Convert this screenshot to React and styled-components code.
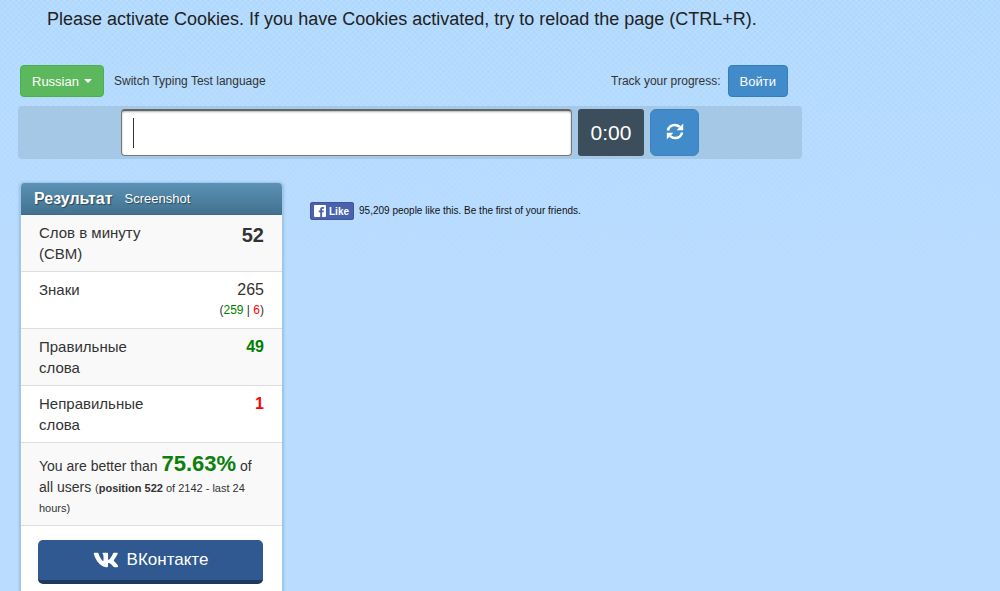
import React from "react";
import styled, { createGlobalStyle } from "styled-components";
import { FaVk } from "react-icons/fa";

const GlobalStyle = createGlobalStyle`
  * {
    box-sizing: border-box;
  }

  body {
    margin: 0;
    background-color: #badcff;
    color: #333333;
    font-family: "Liberation Sans", Arial, sans-serif;
    font-size: 14px;
    line-height: 20px;
  }

  button,
  input {
    font-family: inherit;
  }
`;

// Clips the panel that runs past the bottom of the window
const Page = styled.div`
  height: 100vh;
  overflow: hidden;
  padding: 8px 18px 0;
  background-image: linear-gradient(to bottom, rgba(186, 220, 255, 0) 0, #badcff 320px),
    repeating-linear-gradient(45deg, rgba(150, 210, 245, 0.2) 0 2px, transparent 2px 4px),
    repeating-linear-gradient(-45deg, rgba(150, 210, 245, 0.2) 0 2px, transparent 2px 4px);
`;

const Container = styled.div`
  max-width: 784px;
`;

const Notice = styled.p`
  margin: 0 0 35px;
  padding-left: 29px;
  color: #222222;
  font-size: 18px;
  line-height: 22px;
`;

const TopBar = styled.div`
  display: flex;
  align-items: center;
  justify-content: space-between;
  padding: 0 14px 0 2px;
  margin-bottom: 9px;
`;

const Group = styled.div`
  display: flex;
  align-items: center;
  gap: ${(props) => props.$gap};
  font-size: 12px;
`;

const Button = styled.button`
  display: flex;
  align-items: center;
  gap: 5px;
  height: 32px;
  padding: 0 11px;
  border: 1px solid ${(props) => (props.$green ? "#4cae4c" : "#357ebd")};
  border-radius: 4px;
  background: ${(props) => (props.$green ? "#5cb85c" : "#428bca")};
  color: #ffffff;
  font-size: 13px;
  cursor: pointer;
`;

const Caret = styled.span`
  border-top: 4px solid #ffffff;
  border-left: 4px solid transparent;
  border-right: 4px solid transparent;
`;

const InputRow = styled.div`
  display: flex;
  justify-content: center;
  gap: 6px;
  padding: 3px 0;
  border-radius: 4px;
  background: #a6c8e7;
`;

const WordInput = styled.input`
  flex: 0 1 451px;
  min-width: 0;
  height: 47px;
  padding: 0 12px;
  border: 1px solid #777777;
  border-top: 2px solid #666666;
  border-radius: 4px;
  background: #ffffff linear-gradient(#333333, #333333) 11px 7px / 1px 30px no-repeat;
  box-shadow: inset 0 1px 2px rgba(0, 0, 0, 0.3);
  font-size: 24px;
  outline: none;
`;

const Timer = styled.div`
  width: 66px;
  height: 47px;
  border-radius: 3px;
  background: #3c4d5c;
  color: #ffffff;
  font-size: 21px;
  line-height: 47px;
  text-align: center;
`;

const ReloadButton = styled.button`
  display: flex;
  align-items: center;
  justify-content: center;
  width: 49px;
  height: 47px;
  padding: 0 0 2px;
  border: 1px solid #3a82c2;
  border-radius: 6px;
  background: #428bca;
  color: #ffffff;
  cursor: pointer;
`;

const Content = styled.div`
  display: flex;
  align-items: flex-start;
  gap: 27px;
  padding: 24px 0 0 2px;
`;

const Panel = styled.section`
  flex: 0 0 263px;
  border: 1px solid #a3c6e6;
  border-top: 0;
  border-radius: 4px 4px 0 0;
  background: #ffffff;
  box-shadow: 0 0 3px rgba(60, 110, 160, 0.5);
  overflow: hidden;
`;

const PanelHeader = styled.header`
  display: flex;
  align-items: center;
  gap: 12px;
  height: 32px;
  padding: 0 13px;
  border-bottom: 1px solid #3c6c90;
  background: linear-gradient(#5c92b5, #42728f);
  color: #ffffff;
  text-shadow: 1px 1px 1px #28465a;
`;

const PanelTitle = styled.h3`
  margin: 0;
  font-size: 16px;
  line-height: 20px;
`;

const PanelLink = styled.a`
  color: #ffffff;
  font-size: 13px;
  text-decoration: none;
`;

const Results = styled.table`
  width: 100%;
  border-collapse: collapse;

  tr {
    border-bottom: 1px solid #dddddd;
  }

  tr:nth-child(odd) {
    background: #f9f9f9;
  }
`;

const Label = styled.th`
  width: 130px;
  padding: 7px 0 7px 18px;
  font-size: 15px;
  font-weight: normal;
  line-height: 21px;
  text-align: left;
  vertical-align: top;
`;

const Value = styled.td`
  padding: 7px 18px 7px 0;
  color: ${(props) => props.$color || "#333333"};
  font-size: ${(props) => (props.$big ? "20px" : "16px")};
  font-weight: ${(props) => (props.$bold ? "bold" : "normal")};
  line-height: ${(props) => (props.$big ? "26px" : "21px")};
  text-align: right;
  vertical-align: top;
`;

const Keystrokes = styled.div`
  font-size: 12px;
`;

const Colored = styled.span`
  color: ${(props) => props.$color};
`;

const Ranking = styled.td`
  padding: 8px 18px 8px;
  font-size: 14px;
  line-height: 20px;
`;

const Percent = styled.strong`
  color: #0b800b;
  font-size: 22px;
  line-height: 26px;
`;

const Position = styled.span`
  font-size: 11px;
  line-height: 16px;
`;

const VkButton = styled.button`
  display: flex;
  align-items: center;
  justify-content: center;
  gap: 8px;
  width: calc(100% - 36px);
  height: 44px;
  margin: 14px 18px 24px 17px;
  padding: 0;
  border: 0;
  border-bottom: 4px solid #1d3a5c;
  border-radius: 5px;
  background: #305891;
  color: #ffffff;
  font-size: 17px;
  cursor: pointer;
`;

const LikeBox = styled.div`
  display: flex;
  align-items: center;
  gap: 5px;
  padding-top: 19px;
  color: #111111;
  font-size: 10px;
  line-height: 18px;
`;

const LikeButton = styled.button`
  display: flex;
  align-items: center;
  gap: 3px;
  height: 18px;
  padding: 0 4px 0 3px;
  border: 1px solid #3d539c;
  border-radius: 2px;
  background: #4a62ad;
  color: #ffffff;
  font-size: 10px;
  font-weight: bold;
  cursor: pointer;
`;

// Two arcs chasing each other, the lower one is the upper one turned half round
const ReloadIcon = () => (
  <svg width="18" height="17" viewBox="0 0 18 17" aria-hidden="true">
    <g id="arc">
      <path d="M1.9 7.6C2.5 4.3 5.3 2 8.8 2c1.9 0 3.6.7 4.9 1.9" fill="none" stroke="#ffffff" strokeWidth="2.6" />
      <path d="M17.2.6v6.6h-6.6z" fill="#ffffff" />
    </g>
    <use href="#arc" transform="rotate(180 9 8.5)" />
  </svg>
);

const LikeIcon = () => (
  <svg width="12" height="12" viewBox="0 0 12 12" aria-hidden="true">
    <rect width="12" height="12" rx="1" fill="#ffffff" />
    <path d="M6.2 12V7.3H4.8V5.5h1.4V4.3C6.2 2.8 7.1 2 8.5 2h1.4v1.7H9c-.7 0-.9.3-.9.9v.9h1.8l-.3 1.8H8.1V12z" fill="#4a62ad" />
  </svg>
);

const App = () => (
  <>
    <GlobalStyle />
    <Page>
      <Container>
        <Notice>
          Please activate Cookies. If you have Cookies activated, try to reload the page (CTRL+R).
        </Notice>

        {/* Language and login */}
        <TopBar>
          <Group $gap="10px">
            <Button type="button" $green>
              Russian <Caret />
            </Button>
            <span>Switch Typing Test language</span>
          </Group>
          <Group $gap="7px">
            <span>Track your progress:</span>
            <Button type="button">Войти</Button>
          </Group>
        </TopBar>

        {/* Typing field */}
        <InputRow>
          <WordInput type="text" aria-label="Typing field" />
          <Timer>0:00</Timer>
          <ReloadButton type="button" aria-label="Reload">
            <ReloadIcon />
          </ReloadButton>
        </InputRow>

        <Content>
          <Panel>
            <PanelHeader>
              <PanelTitle>Результат</PanelTitle>
              <PanelLink href="#screenshot">Screenshot</PanelLink>
            </PanelHeader>
            <Results>
              <tbody>
                <tr>
                  <Label scope="row">Слов в минуту (СВМ)</Label>
                  <Value $big $bold>52</Value>
                </tr>
                <tr>
                  <Label scope="row">Знаки</Label>
                  <Value>
                    265
                    <Keystrokes>
                      (<Colored $color="green">259</Colored> | <Colored $color="red">6</Colored>)
                    </Keystrokes>
                  </Value>
                </tr>
                <tr>
                  <Label scope="row">Правильные слова</Label>
                  <Value $bold $color="green">49</Value>
                </tr>
                <tr>
                  <Label scope="row">Неправильные слова</Label>
                  <Value $bold $color="red">1</Value>
                </tr>
                <tr>
                  <Ranking colSpan={2}>
                    You are better than <Percent>75.63%</Percent> of all users{" "}
                    <Position>
                      (<b>position 522</b> of 2142 - last 24 hours)
                    </Position>
                  </Ranking>
                </tr>
              </tbody>
            </Results>
            <VkButton type="button">
              <FaVk size={26} />
              ВКонтакте
            </VkButton>
          </Panel>

          <LikeBox>
            <LikeButton type="button">
              <LikeIcon />
              Like
            </LikeButton>
            <span>95,209 people like this. Be the first of your friends.</span>
          </LikeBox>
        </Content>
      </Container>
    </Page>
  </>
);

export default App;
